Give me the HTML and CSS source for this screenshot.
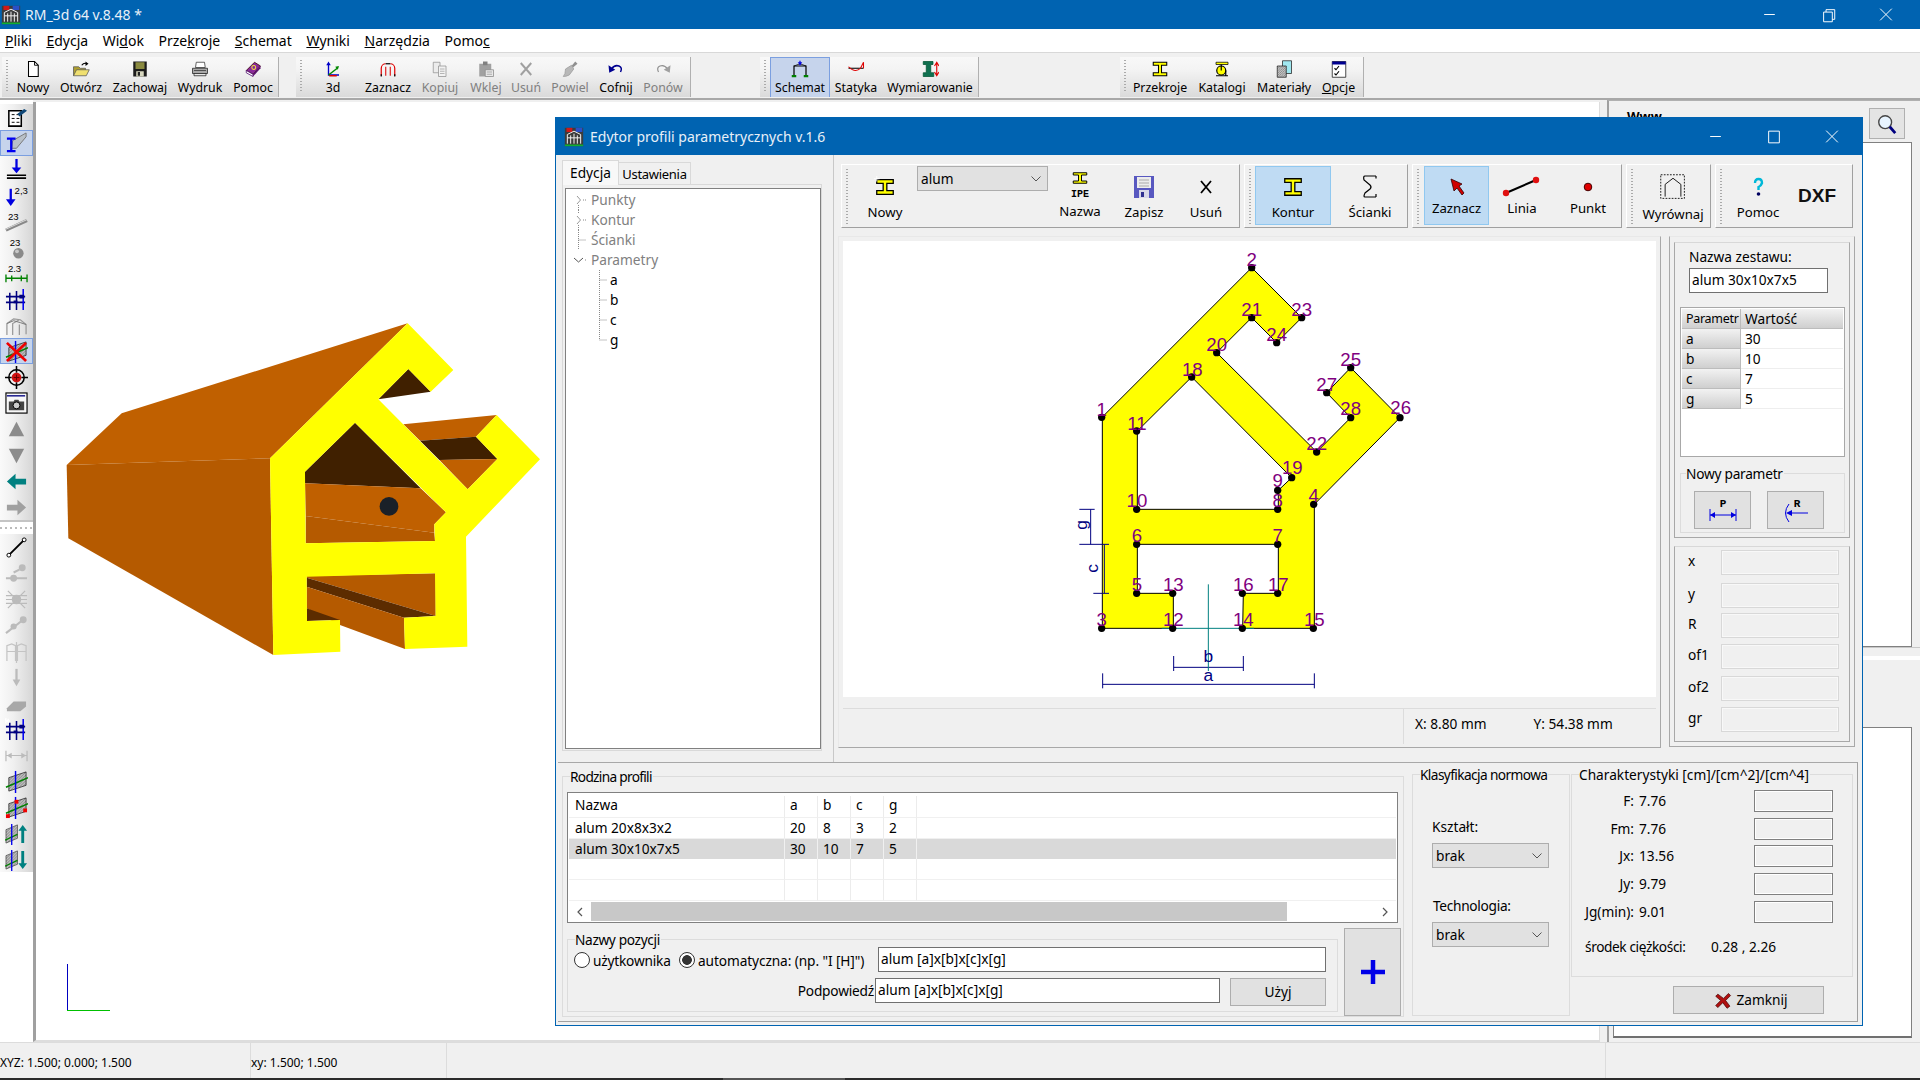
FILE: index.html
```html
<!DOCTYPE html>
<html lang="pl">
<head>
<meta charset="utf-8">
<title>RM_3d 64 v.8.48 *</title>
<link rel="stylesheet" href="styles.css">
</head>
<body>
<svg class="defs" xmlns="http://www.w3.org/2000/svg">
<defs>
<pattern id="h" width="3" height="3" patternUnits="userSpaceOnUse"><rect width="3" height="3" fill="#c4c4c4"/><path d="M0 3L3 0" stroke="#666" stroke-width=".8"/></pattern>
<symbol id="appicon" viewBox="0 0 24 24"><rect x="1" y="1" width="22" height="22" fill="#3c3c3c"/><path d="M3 1h7v5H3z" fill="#d01818"/><path d="M14 1h8v5h-8z" fill="#2a50c8"/><path d="M1 21h22v2H1z" fill="#10b030"/><path d="M4 20V9l8-4 8 4v11M8 20V10M12 20V8M16 20V10M4 13h16" fill="none" stroke="#f0f0f0" stroke-width="1.2"/></symbol>
<symbol id="i-new" viewBox="0 0 24 24"><path d="M6 2h8l5 5v15H6z" fill="#fff" stroke="#000" stroke-width="1.4"/><path d="M14 2v5h5" fill="none" stroke="#000" stroke-width="1.2"/></symbol>
<symbol id="i-open" viewBox="0 0 24 24"><path d="M2 21V9h7l2 2h7v3" fill="#b0a030" stroke="#555"/><path d="M2 21l4-8h17l-4 8z" fill="#f0e070" stroke="#555"/><path d="M13 7q3-4 7-2" fill="none" stroke="#000" stroke-width="1.6"/><path d="M18 2l4 3-4 3z" fill="#000"/></symbol>
<symbol id="i-save" viewBox="0 0 24 24"><rect x="3" y="2" width="18" height="20" fill="#1c1c1c"/><rect x="6" y="3" width="12" height="9" fill="#8a8a40"/><rect x="7" y="15" width="10" height="7" fill="#d8d8c0"/><rect x="9" y="16" width="3" height="5" fill="#222"/></symbol>
<symbol id="i-print" viewBox="0 0 24 24"><path d="M7 3h11l1 7H6z" fill="#fff" stroke="#333"/><path d="M2 11h20v7H2z" fill="#a8a8a8" stroke="#222"/><path d="M4 18h16v3H4z" fill="#e8e8e8" stroke="#222"/><path d="M4 14h16" stroke="#333"/></symbol>
<symbol id="i-book" viewBox="0 0 24 24"><path d="M3 14L14 3l8 5-10 11z" fill="#8a2a98" stroke="#300"/><path d="M3 14l9 5v3l-9-5z" fill="#fff" stroke="#406"/><path d="M12 19l10-11v3L12 22z" fill="#5a1070"/><circle cx="13" cy="10" r="2.6" fill="none" stroke="#f0e040" stroke-width="1.4"/></symbol>
<symbol id="i-3d" viewBox="0 0 24 24"><path d="M6 5v15h14" fill="none" stroke="#0000c8" stroke-width="1.8"/><path d="M6 2l-3 5h6z" fill="#0000c8"/><path d="M6 20L19 10" stroke="#080" stroke-width="2"/><path d="M20 8l-5 1 3 4z" fill="#080"/><path d="M7 21h10" stroke="#d00" stroke-width="2"/></symbol>
<symbol id="i-select" viewBox="0 0 24 24"><path d="M3 21V11a6 6 0 0 1 6-6M21 21V11a6 6 0 0 0-6-6" fill="none" stroke="#e00000" stroke-width="1.6"/><path d="M9 21V9M15 21V9" stroke="#e00000" stroke-width="1.4"/><path d="M9 5h6" stroke="#000" stroke-width="1.6"/><path d="M3 22v-3M21 22v-3" stroke="#000" stroke-width="1.6"/></symbol>
<symbol id="i-copy" viewBox="0 0 24 24"><path d="M3 3h9v14H3z" fill="#ececec" stroke="#909090"/><path d="M10 8h10v14H10z" fill="#f2f2f2" stroke="#909090"/><path d="M12 12h6M12 15h6M12 18h6" stroke="#a0a0a0"/></symbol>
<symbol id="i-paste" viewBox="0 0 24 24"><path d="M3 5h16v17H3z" fill="#a0a0a0"/><rect x="8" y="2" width="6" height="5" fill="#808080"/><path d="M11 13h11v9H11z" fill="#e8e8e8" stroke="#888"/><path d="M13 16h7M13 19h7" stroke="#999"/></symbol>
<symbol id="i-x-gray" viewBox="0 0 24 24"><path d="M5 4l14 16M19 4L5 20" stroke="#a0a0a0" stroke-width="2.6"/></symbol>
<symbol id="i-brush" viewBox="0 0 24 24"><path d="M14 8l5-6 3 3-6 5z" fill="#909090"/><path d="M6 12l8-5 3 5-6 8q-4 2-8 2 3-3 3-10z" fill="#b8b8b8" stroke="#999"/></symbol>
<symbol id="i-undo" viewBox="0 0 24 24"><path d="M6 12q4-6 10-4 5 2 2 8" fill="none" stroke="#000090" stroke-width="2"/><path d="M2 7l1 10 8-4z" fill="#000090"/></symbol>
<symbol id="i-redo" viewBox="0 0 24 24"><path d="M18 12q-4-6-10-4-5 2-2 8" fill="none" stroke="#909090" stroke-width="1.6"/><path d="M22 7l-1 10-8-4z" fill="#a0a0a0"/></symbol>
<symbol id="i-frame" viewBox="0 0 24 24"><path d="M4 20V8h16v12" fill="none" stroke="#000" stroke-width="1.6"/><path d="M4 8l8-3 8 3" fill="none" stroke="#000"/><path d="M1 20h6v3H1zM17 20h6v3h-6z" fill="#008000"/><path d="M12 1v6" stroke="#0000e0" stroke-width="1.6"/><path d="M9 3l3 4 3-4z" fill="#0000e0"/></symbol>
<symbol id="i-static" viewBox="0 0 24 24"><path d="M2 11h20" stroke="#000" stroke-width="1.4"/><path d="M2 9q9 9 16 2l4-8v8" fill="none" stroke="#e00000" stroke-width="1.4"/></symbol>
<symbol id="i-dim" viewBox="0 0 24 24"><path d="M3 2h13v4h-3v11h4v5H3v-5h4V6H3z" fill="#107050" stroke="#053"/><path d="M21 3v18M18 8l3-5 3 5M18 16l3 5 3-5" fill="none" stroke="#e00000" stroke-width="1.5"/></symbol>
<symbol id="i-beam" viewBox="0 0 24 24"><path d="M3 3h18v4h-7v10h7v4H3v-4h7V7H3z" fill="#ffff00" stroke="#000" stroke-width="1.4"/></symbol>
<symbol id="i-cat" viewBox="0 0 24 24"><path d="M4 3h16v3H4z" fill="#ffff00" stroke="#000"/><circle cx="11" cy="14" r="6" fill="#ffff00" stroke="#000" stroke-width="1.6"/><path d="M11 6v8M17 14v7M4 21h16" stroke="#000" stroke-width="1.6" fill="none"/></symbol>
<symbol id="i-mat" viewBox="0 0 24 24"><path d="M10 1h12v17H10z" fill="#a0e8f0" stroke="#222"/><path d="M3 8h12v15H3z" fill="url(#h)" stroke="#222"/></symbol>
<symbol id="i-opt" viewBox="0 0 24 24"><path d="M3 2h18v21H3z" fill="#fff" stroke="#111"/><path d="M3 2h18v4H3z" fill="#000090"/><path d="M6 11l2 2 4-5M6 18l2 2 4-5" fill="none" stroke="#000" stroke-width="1.5"/></symbol>
<symbol id="i-beam-star" viewBox="0 0 24 24"><path d="M3 4h18v4h-7v8h7v4H3v-4h7V8H3z" fill="#ffff00" stroke="#000" stroke-width="1.4"/><path d="M3 0v6M0 3h6" stroke="#fff" stroke-width="1"/></symbol>
<symbol id="i-ipe" viewBox="0 0 24 24"><path d="M3 1h18v3h-7v8h7v3H3v-3h7V4H3z" fill="#ffff00" stroke="#000" stroke-width="1.3"/></symbol>
<symbol id="i-save2" viewBox="0 0 24 24"><path d="M2 1h20v22H2z" fill="#5858c0"/><rect x="5" y="2" width="14" height="11" fill="#ececec"/><path d="M7 5h10M7 8h10M7 11h10" stroke="#aaa"/><rect x="7" y="15" width="10" height="8" fill="#d8d8e8"/><rect x="9" y="17" width="3" height="5" fill="#303090"/></symbol>
<symbol id="i-x" viewBox="0 0 24 24"><path d="M7 6l10 12M17 6L7 18" stroke="#000" stroke-width="1.8"/></symbol>
<symbol id="i-wall" viewBox="0 0 24 24"><path d="M18 1H7Q5 1 6 5L12 10Q14 12 12 14L7 18Q5 22 7 22H18M18 1v2.500M18 19v3" fill="none" stroke="#000" stroke-width="1.200"/></symbol>
<symbol id="i-arrow" viewBox="0 0 24 24"><path d="M6 4l11 5-3 2 5 7-2 2-5-7-3 3z" fill="#d00000" stroke="#300" stroke-width=".8"/></symbol>
<symbol id="i-line" viewBox="0 0 40 24"><path d="M4 18L34 5" stroke="#000" stroke-width="2"/><circle cx="4" cy="18" r="3.2" fill="#e01010"/><circle cx="34" cy="5" r="3.2" fill="#e01010"/></symbol>
<symbol id="i-dot" viewBox="0 0 24 24"><circle cx="12" cy="12" r="3.8" fill="#e00000" stroke="#400"/></symbol>
<symbol id="i-house" viewBox="0 0 32 32"><rect x="2" y="2" width="27" height="27" fill="none" stroke="#000" stroke-dasharray="2 1.500"/><path d="M7 27V13l9-7 9 7v14" fill="none" stroke="#000"/></symbol>
<symbol id="i-q" viewBox="0 0 24 24"><path d="M9 8q0-4 3.500-4t3.500 4q-1 3-3.500 4v3" fill="none" stroke="#00b8d8" stroke-width="2.400"/><circle cx="12.500" cy="19" r="1.800" fill="#000060"/></symbol>
<symbol id="s-prop" viewBox="0 0 24 24"><path d="M4 5h13v16H4z" fill="#fff" stroke="#000" stroke-width="1.6"/><path d="M7 9h3M12 9h3M7 13h3M12 13h3M7 17h3M12 17h3" stroke="#000"/><path d="M13 8l7-5 3 2-8 6z" fill="#104878"/></symbol>
<symbol id="s-beam" viewBox="0 0 24 24"><path d="M8 9l14-8v4L12 17H7z" fill="#b8c0c8" stroke="#777"/><path d="M2 7h9M6.500 7v13M2 20h9" stroke="#0000f0" stroke-width="2.400"/></symbol>
<symbol id="s-load" viewBox="0 0 24 24"><path d="M12 1v11" stroke="#0000e0" stroke-width="2.400"/><path d="M7 10h10l-5 6z" fill="#0000e0"/><path d="M2 18h20M2 21h20" stroke="#000" stroke-width="1.600"/></symbol>
<symbol id="s-load23" viewBox="0 0 24 24"><path d="M6 5v13" stroke="#0000e0" stroke-width="2.400"/><path d="M1 16h10l-5 7z" fill="#0000e0"/><text x="10" y="10" class="ictext">2,3</text></symbol>
<symbol id="s-bar23" viewBox="0 0 24 24"><text x="3" y="10" class="ictext">23</text><path d="M1 21L23 11" stroke="#888" stroke-width="3.400"/><path d="M1 20L23 10" stroke="#ddd"/></symbol>
<symbol id="s-ball23" viewBox="0 0 24 24"><text x="5" y="10" class="ictext">23</text><circle cx="14" cy="18" r="5.400" fill="#8a8a8a"/><circle cx="12.500" cy="16" r="2" fill="#c8c8c8"/></symbol>
<symbol id="s-dim23" viewBox="0 0 24 24"><text x="3" y="10" class="ictext">2.3</text><path d="M1 17h22M1 13v8M7 14v6M17 14v6M23 13v8" fill="none" stroke="#008000" stroke-width="1.400"/></symbol>
<symbol id="s-grid" viewBox="0 0 24 24"><path d="M1 9h20M1 15h20" stroke="#000080" stroke-width="1.800"/><path d="M5 5v18M12 3v20" stroke="#000080" stroke-width="1.600"/><path d="M19 1v22" stroke="#0000f0" stroke-width="1.600"/><path d="M15 7h5v4h-5zM9 13h4v3H9z" fill="#000080"/></symbol>
<symbol id="s-house" viewBox="0 0 24 24"><path d="M2 22V10l7-5 7 1 6 5v10M8 22V10l7-4M15 22V11" fill="none" stroke="#999" stroke-width="1.300"/><path d="M2 10l7-3 7 2 6 2" fill="none" stroke="#777"/></symbol>
<symbol id="s-hatch" viewBox="0 0 24 24"><path d="M4 8L22 2v14L4 22z" fill="url(#h)" stroke="#222" stroke-width=".8"/><path d="M1 18L24 8" stroke="#008000" stroke-width="1.500"/><path d="M11 1v23" stroke="#0000f0" stroke-width="1.500"/></symbol>
<symbol id="s-hatch-x" viewBox="0 0 24 24"><use href="#s-hatch"/><path d="M2 3l20 19M22 3L2 22" stroke="#f00000" stroke-width="2.800"/></symbol>
<symbol id="s-target" viewBox="0 0 24 24"><circle cx="12" cy="12" r="8" fill="none" stroke="#000" stroke-width="1.600"/><path d="M0 12h7M17 12h7M12 0v7M12 17v7" stroke="#000" stroke-width="1.600"/><circle cx="12" cy="12" r="5" fill="#d01010"/><path d="M9 12h6M12 9v6" stroke="#600"/></symbol>
<symbol id="s-cam" viewBox="0 0 24 24"><rect x="1" y="1" width="22" height="21" fill="#f8f8f8" stroke="#000" stroke-width="1.200"/><path d="M2 4h19" stroke="#000080" stroke-width="1.400"/><path d="M4 10h5l1-2h4l1 2h5v9H4z" fill="#444"/><circle cx="12" cy="14" r="3.600" fill="#ccc" stroke="#000"/></symbol>
<symbol id="s-up" viewBox="0 0 24 24"><path d="M12 4l8 15H4z" fill="#8c8c8c"/></symbol>
<symbol id="s-down" viewBox="0 0 24 24"><path d="M12 20l8-15H4z" fill="#8c8c8c"/></symbol>
<symbol id="s-left" viewBox="0 0 24 24"><path d="M2 12l9-8v5h11v6H11v5z" fill="#008080"/></symbol>
<symbol id="s-right" viewBox="0 0 24 24"><path d="M22 12l-9-8v5H2v6h11v5z" fill="#a0a0a0"/></symbol>
<symbol id="s-wire" viewBox="0 0 24 24"><path d="M4 20L20 4" stroke="#000" stroke-width="2"/><circle cx="4" cy="20" r="2" fill="#fff" stroke="#000"/><circle cx="20" cy="4" r="2" fill="#fff" stroke="#000"/></symbol>
<symbol id="s-g1" viewBox="0 0 24 24"><circle cx="18" cy="6" r="3.600" fill="#bbb"/><path d="M15 8l-6 3M1 17h22" stroke="#bbb" stroke-width="2.200"/><circle cx="9" cy="17" r="3.600" fill="#bbb"/></symbol>
<symbol id="s-g2" viewBox="0 0 24 24"><circle cx="12" cy="12" r="5" fill="#bbb"/><path d="M1 12h22M1 8h22M1 16h22M3 3l18 18M21 3L3 21" stroke="#bbb" stroke-width="1.300"/></symbol>
<symbol id="s-g3" viewBox="0 0 24 24"><circle cx="19" cy="6" r="3.600" fill="#bbb"/><circle cx="9" cy="13" r="3.200" fill="#bbb"/><path d="M1 20L19 6" stroke="#bbb" stroke-width="2.200"/></symbol>
<symbol id="s-g4" viewBox="0 0 24 24"><path d="M2 22V6l5-2 4 2v16M13 22V6l4-2 5 2v16M12 2v22M2 12h9M13 12h9" fill="none" stroke="#c4c4c4" stroke-width="1.300"/></symbol>
<symbol id="s-g5" viewBox="0 0 24 24"><path d="M12 3v12" stroke="#bbb" stroke-width="2.400"/><path d="M8 14h8l-4 7z" fill="#bbb"/></symbol>
<symbol id="s-g6" viewBox="0 0 24 24"><path d="M2 17l7-7h13v5l-6 5H2z" fill="#a8a8a8"/></symbol>
<symbol id="s-g7" viewBox="0 0 24 24"><path d="M1 12h22M1 7v11M23 7v11M4 12h3M17 12h3" stroke="#bbb" stroke-width="1.300"/><path d="M2 12l5-3v6zM22 12l-5-3v6z" fill="#bbb"/></symbol>
<symbol id="s-grid2" viewBox="0 0 24 24"><use href="#s-grid"/><path d="M1 0v6M-1 3h6M0 1l4 4M4 1L0 5" stroke="#fff" stroke-width="1.100"/></symbol>
<symbol id="s-hatch2" viewBox="0 0 24 24"><use href="#s-hatch"/><rect x="1" y="19" width="4" height="4" fill="#f00000"/><rect x="10" y="4" width="4" height="4" fill="#f00000"/><rect x="19" y="13" width="4" height="4" fill="#f00000"/></symbol>
<symbol id="s-hatch-up" viewBox="0 0 24 24"><path d="M1 8L13 3v14L1 22z" fill="url(#h)" stroke="#222" stroke-width=".6"/><path d="M0 19L13 13" stroke="#008000" stroke-width="1.400"/><path d="M7 2v22" stroke="#0000f0" stroke-width="1.400"/><path d="M15 9h2v13h3V9h3l-4.500-6-4.500 6z" fill="#008080"/></symbol>
<symbol id="s-hatch-down" viewBox="0 0 24 24"><path d="M1 8L13 3v14L1 22z" fill="url(#h)" stroke="#222" stroke-width=".6"/><path d="M0 19L13 13" stroke="#008000" stroke-width="1.400"/><path d="M7 2v22" stroke="#0000f0" stroke-width="1.400"/><path d="M17 3h3v13h3l-4.500 6-4.500-6h3z" fill="#008080"/></symbol>
<symbol id="chev" viewBox="0 0 12 8"><path d="M1.500 1.500L6 6l4.500-4.500" fill="none" stroke="#555" stroke-width="1"/></symbol>
</defs>
</svg>

<header class="titlebar">
  <svg class="app-ico"><use href="#appicon"/></svg>
  <span class="title-text">RM_3d 64 v.8.48 *</span>
  <div class="winctl">
    <svg class="ctl" viewBox="0 0 58 30"><path d="M24 15h11" stroke="#fff"/></svg>
    <svg class="ctl" viewBox="0 0 58 30"><path d="M25.500 12.500h9v10h-9zM28 12.500V10h9v10h-2.500" fill="none" stroke="#fff"/></svg>
    <svg class="ctl" viewBox="0 0 58 30"><path d="M24 9l12 12M36 9L24 21" stroke="#fff"/></svg>
  </div>
</header>

<nav class="menubar">
  <span><u>P</u>liki</span><span><u>E</u>dycja</span><span>Wi<u>d</u>ok</span><span>Prze<u>k</u>roje</span><span><u>S</u>chemat</span><span><u>W</u>yniki</span><span><u>N</u>arzędzia</span><span>Pomo<u>c</u></span>
</nav>

<div class="toolbars">
  <div class="tbg tbg1"><i class="grip"></i>
    <div class="tb w42"><svg class="tic"><use href="#i-new"/></svg>Nowy</div>
    <div class="tb w54"><svg class="tic"><use href="#i-open"/></svg>Otwórz</div>
    <div class="tb w64"><svg class="tic"><use href="#i-save"/></svg>Zachowaj</div>
    <div class="tb w56"><svg class="tic"><use href="#i-print"/></svg>Wydruk</div>
    <div class="tb w50"><svg class="tic"><use href="#i-book"/></svg>Pomoc</div>
  </div>
  <div class="tbg tbg2"><i class="grip"></i>
    <div class="tb w54"><svg class="tic"><use href="#i-3d"/></svg>3d</div>
    <div class="tb w56"><svg class="tic"><use href="#i-select"/></svg>Zaznacz</div>
    <div class="tb w48 off"><svg class="tic"><use href="#i-copy"/></svg>Kopiuj</div>
    <div class="tb w44 off"><svg class="tic"><use href="#i-paste"/></svg>Wklej</div>
    <div class="tb w36 off"><svg class="tic"><use href="#i-x-gray"/></svg>Usuń</div>
    <div class="tb w52 off"><svg class="tic"><use href="#i-brush"/></svg>Powiel</div>
    <div class="tb w40"><svg class="tic"><use href="#i-undo"/></svg>Cofnij</div>
    <div class="tb w54 off"><svg class="tic"><use href="#i-redo"/></svg>Ponów</div>
  </div>
  <div class="tbg tbg3"><i class="grip"></i>
    <div class="tb w60 tb-on"><svg class="tic"><use href="#i-frame"/></svg>Schemat</div>
    <div class="tb w52"><svg class="tic"><use href="#i-static"/></svg>Statyka</div>
    <div class="tb w96"><svg class="tic"><use href="#i-dim"/></svg>Wymiarowanie</div>
  </div>
  <div class="tbg tbg4"><i class="grip"></i>
    <div class="tb w60"><svg class="tic"><use href="#i-beam"/></svg>Przekroje</div>
    <div class="tb w64"><svg class="tic"><use href="#i-cat"/></svg>Katalogi</div>
    <div class="tb w60"><svg class="tic"><use href="#i-mat"/></svg>Materiały</div>
    <div class="tb w49"><svg class="tic"><use href="#i-opt"/></svg><span><u>O</u>pcje</span></div>
  </div>
</div>

<main class="main">
  <aside class="strip">
    <div class="strip-tools">
      <div class="st"><svg><use href="#s-prop"/></svg></div>
      <div class="st st-on"><svg><use href="#s-beam"/></svg></div>
      <div class="st"><svg><use href="#s-load"/></svg></div>
      <div class="st"><svg><use href="#s-load23"/></svg></div>
      <div class="st"><svg><use href="#s-bar23"/></svg></div>
      <div class="st"><svg><use href="#s-ball23"/></svg></div>
      <div class="st"><svg><use href="#s-dim23"/></svg></div>
      <div class="st"><svg><use href="#s-grid"/></svg></div>
      <div class="st"><svg><use href="#s-house"/></svg></div>
      <div class="st st-on"><svg><use href="#s-hatch-x"/></svg></div>
      <div class="st"><svg><use href="#s-target"/></svg></div>
      <div class="st"><svg><use href="#s-cam"/></svg></div>
      <div class="st"><svg><use href="#s-up"/></svg></div>
      <div class="st"><svg><use href="#s-down"/></svg></div>
      <div class="st"><svg><use href="#s-left"/></svg></div>
      <div class="st"><svg><use href="#s-right"/></svg></div>
    </div>
    <div class="strip-sep"></div>
    <div class="strip-tools">
      <div class="st"><svg><use href="#s-wire"/></svg></div>
      <div class="st"><svg><use href="#s-g1"/></svg></div>
      <div class="st"><svg><use href="#s-g2"/></svg></div>
      <div class="st"><svg><use href="#s-g3"/></svg></div>
      <div class="st"><svg><use href="#s-g4"/></svg></div>
      <div class="st"><svg><use href="#s-g5"/></svg></div>
      <div class="st"><svg><use href="#s-g6"/></svg></div>
      <div class="st"><svg><use href="#s-grid2"/></svg></div>
      <div class="st"><svg><use href="#s-g7"/></svg></div>
      <div class="st"><svg><use href="#s-hatch"/></svg></div>
      <div class="st"><svg><use href="#s-hatch2"/></svg></div>
      <div class="st"><svg><use href="#s-hatch-up"/></svg></div>
      <div class="st"><svg><use href="#s-hatch-down"/></svg></div>
    </div>
  </aside>

  <section class="view3d">
    <svg class="scene" viewBox="0 0 1564 940" xmlns="http://www.w3.org/2000/svg">
      <g transform="translate(4 198) scale(.33333)">
        <path d="M245 340L1103 70 690 475 80 495z" fill="#c06000"/>
        <path d="M80 495L690 475 700 1065 85 715z" fill="#b55a00"/>
        <path d="M1105 207l67 68-157 23z" fill="#402000"/>
        <path d="M1090 373l280-28-62 65-168 12z" fill="#c06000"/>
        <path d="M1140 422l168-12 64 67-174 3z" fill="#402000"/>
        <path d="M1198 480l174-3-89 91z" fill="#c06000"/>
        <path d="M795 515L945 368 1142 565 795 550z" fill="#402000"/>
        <path d="M795 550l347 15 76 72-35 36v25L797 648z" fill="#c06000"/>
        <path d="M797 648l386 50 2 25-388 7z" fill="#b55a00"/>
        <circle cx="1047" cy="619" r="28" fill="#1a2028"/>
        <path d="M800 828l387-8v128L800 833z" fill="#b55a00"/>
        <path d="M800 833l387 115-95 5-292-93z" fill="#5c2c00"/>
        <path d="M800 860l292 93 3 94-195-72-100-50z" fill="#b55a00"/>
        <path d="M800 925l100 35-99 3z" fill="#5c2c00"/>
        <path fill-rule="evenodd" fill="#ffff00" d="M690 475L1103 70l137 140-68 65-67-68-90 91 268 270 89-91-64-67 62-65 130 133-222 232 4 330-187 7-3-94 95-5-2-128-385 10 1 133 99-3 1 95-201 10zM795 515l2 215 388-7-2-50 35-36L945 368z"/>
      </g>
      <path d="M31.500 862v46" stroke="#0000c0" fill="none"/>
      <path d="M31 908.500h43" stroke="#00c000" fill="none"/>
    </svg>
  </section>

  <aside class="rpanel">
    <div class="rp-head"><span class="rp-www">Www</span>
      <div class="rp-search"><svg viewBox="0 0 24 24"><circle cx="10" cy="10" r="7" fill="#e8f4ff" stroke="#444" stroke-width="1.500"/><path d="M15 15l6 7" stroke="#000080" stroke-width="3"/></svg></div>
    </div>
    <div class="rp-white rp-top"></div>
    <div class="rp-split"></div>
    <div class="rp-gray"></div>
    <div class="rp-white rp-bot"></div>
  </aside>
</main>

<footer class="statusbar">
  <span class="sb sb1">XYZ: 1.500; 0.000; 1.500</span>
  <span class="sb sb2">xy: 1.500; 1.500</span>
  <span class="sb sb3"></span>
</footer>
<div class="taskbar"><i class="task-on"></i></div>

<div class="dialog">
  <div class="d-title">
    <svg class="app-ico"><use href="#appicon"/></svg>
    <span class="d-title-text">Edytor profili parametrycznych v.1.6</span>
    <div class="winctl d-ctl">
      <svg class="ctl" viewBox="0 0 58 38"><path d="M23 19h11" stroke="#fff"/></svg>
      <svg class="ctl" viewBox="0 0 58 38"><path d="M23.500 13.500h11v12h-11z" fill="none" stroke="#fff"/></svg>
      <svg class="ctl" viewBox="0 0 58 38"><path d="M23 13l12 12M35 13L23 25" stroke="#fff"/></svg>
    </div>
  </div>

  <div class="d-top">
    <div class="d-left">
      <div class="tabs"><span class="tab tab-on">Edycja</span><span class="tab tab-u">Ustawienia</span></div>
      <div class="tabpage">
        <div class="tree">
          <div class="t-row t-gray"><svg class="t-pre" viewBox="0 0 28 20"><path d="M11 6l3.500 4L11 14" fill="none" stroke="#999"/><path d="M12.500 15v5M17 10h3" stroke="#888" stroke-dasharray="1 1" fill="none"/></svg>Punkty</div>
          <div class="t-row t-gray"><svg class="t-pre" viewBox="0 0 28 20"><path d="M11 6l3.500 4L11 14" fill="none" stroke="#999"/><path d="M12.500 0v4M12.500 15v5M17 10h3" stroke="#888" stroke-dasharray="1 1" fill="none"/></svg>Kontur</div>
          <div class="t-row t-gray"><svg class="t-pre" viewBox="0 0 28 20"><path d="M12.500 0v20M12.500 10h8" stroke="#888" stroke-dasharray="1 1" fill="none"/></svg>Ścianki</div>
          <div class="t-row t-gray"><svg class="t-pre" viewBox="0 0 28 20"><path d="M8 8l4.500 4L17 8" fill="none" stroke="#555"/><path d="M19 10h2" stroke="#888" stroke-dasharray="1 1" fill="none"/></svg>Parametry</div>
          <div class="t-row t-kid"><svg class="t-pre2" viewBox="0 0 46 20"><path d="M33.500 0v20M33.500 10h8" stroke="#888" stroke-dasharray="1 1" fill="none"/></svg>a</div>
          <div class="t-row t-kid"><svg class="t-pre2" viewBox="0 0 46 20"><path d="M33.500 0v20M33.500 10h8" stroke="#888" stroke-dasharray="1 1" fill="none"/></svg>b</div>
          <div class="t-row t-kid"><svg class="t-pre2" viewBox="0 0 46 20"><path d="M33.500 0v20M33.500 10h8" stroke="#888" stroke-dasharray="1 1" fill="none"/></svg>c</div>
          <div class="t-row t-kid"><svg class="t-pre2" viewBox="0 0 46 20"><path d="M33.500 0v10M33.500 10h8" stroke="#888" stroke-dasharray="1 1" fill="none"/></svg>g</div>
        </div>
      </div>
    </div>

    <div class="d-right">
      <div class="d-toolbar">
        <div class="dg dg-a"><i class="grip"></i>
          <div class="dt w64"><svg class="dic ib"><use href="#i-beam-star"/></svg><span>Nowy</span></div>
          <div class="dcombo"><span>alum</span><svg><use href="#chev"/></svg></div>
          <div class="dt w64"><svg class="dic ipe"><use href="#i-ipe"/></svg><b class="ipe-t">IPE</b><span>Nazwa</span></div>
          <div class="dt w64"><svg class="dic"><use href="#i-save2"/></svg><span>Zapisz</span></div>
          <div class="dt w60"><svg class="dic"><use href="#i-x"/></svg><span>Usuń</span></div>
        </div>
        <div class="dg dg-b"><i class="grip"></i>
          <div class="dt w76 dt-on"><svg class="dic ib"><use href="#i-beam"/></svg><span>Kontur</span></div>
          <div class="dt w78"><svg class="dic"><use href="#i-wall"/></svg><span>Ścianki</span></div>
        </div>
        <div class="dg dg-c"><i class="grip"></i>
          <div class="dt w65 dt-on dt-up"><svg class="dic"><use href="#i-arrow"/></svg><span>Zaznacz</span></div>
          <div class="dt w66 dt-up"><svg class="dic wide"><use href="#i-line"/></svg><span>Linia</span></div>
          <div class="dt w66 dt-up"><svg class="dic"><use href="#i-dot"/></svg><span>Punkt</span></div>
        </div>
        <div class="dg dg-d"><i class="grip"></i>
          <div class="dt w70"><svg class="dic big"><use href="#i-house"/></svg><span>Wyrównaj</span></div>
        </div>
        <div class="dg dg-e"><i class="grip"></i>
          <div class="dt w64"><svg class="dic"><use href="#i-q"/></svg><span>Pomoc</span></div>
          <div class="dt w54 dxf">DXF</div>
        </div>
      </div>

      <div class="d-panels">
        <div class="canvas-panel">
          <div class="canvas">
            <svg class="profile" viewBox="0 0 1200 1380" xmlns="http://www.w3.org/2000/svg">
              <path fill-rule="evenodd" fill="#ffff00" stroke="#000" stroke-width="3" d="M127 528L575 80 725 230 650 305 575 230 470 335 770 633 872 530 800 455 872 380 1020 530 763 790V1162H548L550 1057H655V910H232V1057H340V1162H127zM232 570L395 408 695 710 655 748V805H232z"/>
              <g fill="none" stroke="#000080" stroke-width="3">
                <path d="M92 805V910M58 805H104M58 910H147M133 910V1057M100 1057H147"/>
                <path d="M341 1279H550M341 1245V1290M550 1245V1290"/>
                <path d="M128 1330H763M128 1297V1342M763 1297V1342"/>
              </g>
              <path d="M445 1030V1290M305 1162H582" stroke="#008080" stroke-width="3" fill="none"/>
              <g fill="#000">
                <circle cx="125" cy="529" r="11"/><circle cx="575" cy="80" r="11"/><circle cx="125" cy="1162" r="11"/><circle cx="761" cy="790" r="11"/><circle cx="230" cy="1057" r="11"/><circle cx="230" cy="910" r="11"/><circle cx="653" cy="910" r="11"/><circle cx="653" cy="805" r="11"/><circle cx="653" cy="748" r="11"/><circle cx="230" cy="805" r="11"/><circle cx="230" cy="570" r="11"/><circle cx="338" cy="1162" r="11"/><circle cx="338" cy="1057" r="11"/><circle cx="547" cy="1162" r="11"/><circle cx="760" cy="1162" r="11"/><circle cx="547" cy="1057" r="11"/><circle cx="653" cy="1057" r="11"/><circle cx="395" cy="408" r="11"/><circle cx="695" cy="710" r="11"/><circle cx="470" cy="335" r="11"/><circle cx="575" cy="230" r="11"/><circle cx="770" cy="633" r="11"/><circle cx="725" cy="230" r="11"/><circle cx="650" cy="305" r="11"/><circle cx="872" cy="380" r="11"/><circle cx="1020" cy="530" r="11"/><circle cx="800" cy="455" r="11"/><circle cx="872" cy="530" r="11"/>
              </g>
              <g class="nlabel">
                <text x="125" y="525">1</text><text x="575" y="74">2</text><text x="125" y="1156">3</text><text x="761" y="784">4</text><text x="231" y="1051">5</text><text x="231" y="904">6</text><text x="653" y="904">7</text><text x="653" y="799">8</text><text x="653" y="738">9</text><text x="231" y="799">10</text><text x="231" y="568">11</text><text x="340" y="1156">12</text><text x="340" y="1051">13</text><text x="550" y="1156">14</text><text x="763" y="1156">15</text><text x="550" y="1051">16</text><text x="655" y="1051">17</text><text x="397" y="404">18</text><text x="697" y="700">19</text><text x="470" y="329">20</text><text x="575" y="224">21</text><text x="770" y="626">22</text><text x="725" y="224">23</text><text x="650" y="299">24</text><text x="872" y="374">25</text><text x="1022" y="520">26</text><text x="800" y="449">27</text><text x="872" y="521">28</text>
              </g>
              <g class="dlabel">
                <text x="445" y="1262">b</text><text x="445" y="1320">a</text>
                <text transform="translate(82 852) rotate(-90)">g</text>
                <text transform="translate(115 982) rotate(-90)">c</text>
              </g>
            </svg>
          </div>
          <div class="canvas-status">
            <div class="cs-left"></div>
            <div class="cs-right"><span>X: 8.80 mm</span><span>Y: 54.38 mm</span></div>
          </div>
        </div>

        <div class="side">
          <div class="side-box sb-a">
            <div class="side-lbl">Nazwa zestawu:</div>
            <div class="field f-name">alum 30x10x7x5</div>
            <div class="ptable">
              <div class="p-row p-head"><span class="p-fit">Parametr</span><span>Wartość</span></div>
              <div class="p-row"><span>a</span><span>30</span></div>
              <div class="p-row"><span>b</span><span>10</span></div>
              <div class="p-row"><span>c</span><span>7</span></div>
              <div class="p-row"><span>g</span><span>5</span></div>
            </div>
            <div class="fs fs-new"><span class="lg">Nowy parametr</span>
              <div class="pbtn"><svg viewBox="0 0 32 24"><text x="16" y="9" class="pt">P</text><path d="M3 11v12M29 11v12M3 17h26" stroke="#0000e0" fill="none"/><path d="M3 17l5-3v6zM29 17l-5-3v6z" fill="#0000e0"/></svg></div>
              <div class="pbtn"><svg viewBox="0 0 32 24"><text x="17" y="9" class="pt">R</text><path d="M9 6Q2 15 9 24M8 15h20" stroke="#0000e0" fill="none"/><path d="M6 15l6-3v6z" fill="#0000e0"/></svg></div>
            </div>
          </div>
          <div class="side-box sb-b">
            <div class="kv k1"><span>x</span><i class="ro"></i></div>
            <div class="kv k2"><span>y</span><i class="ro"></i></div>
            <div class="kv k3"><span>R</span><i class="ro"></i></div>
            <div class="kv k4"><span>of1</span><i class="ro"></i></div>
            <div class="kv k5"><span>of2</span><i class="ro"></i></div>
            <div class="kv k4"><span>gr</span><i class="ro"></i></div>
          </div>
        </div>
      </div>
    </div>
  </div>

  <div class="d-bottom">
    <div class="fs fs-family"><span class="lg lg-fam">Rodzina profili</span>
      <div class="ftable">
        <div class="f-row f-head"><span>Nazwa</span><span>a</span><span>b</span><span>c</span><span>g</span><span></span></div>
        <div class="f-row"><span>alum 20x8x3x2</span><span>20</span><span>8</span><span>3</span><span>2</span><span></span></div>
        <div class="f-row f-sel"><span>alum 30x10x7x5</span><span>30</span><span>10</span><span>7</span><span>5</span><span></span></div>
        <div class="f-row"><span></span><span></span><span></span><span></span><span></span><span></span></div>
        <div class="f-row"><span></span><span></span><span></span><span></span><span></span><span></span></div>
        <div class="hscroll"><svg viewBox="0 0 8 12"><path d="M6 2L2 6l4 4" fill="none" stroke="#555" stroke-width="1.200"/></svg><i class="thumb"></i><svg viewBox="0 0 8 12"><path d="M2 2l4 4-4 4" fill="none" stroke="#555" stroke-width="1.200"/></svg></div>
      </div>
      <div class="fam-low">
        <div class="fs fs-names"><span class="lg lg-nam">Nazwy pozycji</span>
          <div class="n-row">
            <i class="radio"></i><span class="r-l1">użytkownika</span>
            <i class="radio radio-on"></i><span class="r-l2">automatyczna: (np. "I [H]")</span>
            <div class="field f-auto">alum [a]x[b]x[c]x[g]</div>
          </div>
          <div class="n-row n-row2">
            <span class="hint">Podpowiedź</span>
            <div class="field f-hint">alum [a]x[b]x[c]x[g]</div>
            <div class="btn b-use">Użyj</div>
          </div>
        </div>
        <div class="btn b-plus"><svg viewBox="0 0 28 28"><path d="M14 2v24M2 14h24" stroke="#0000e8" stroke-width="4.500"/></svg></div>
      </div>
    </div>

    <div class="fs fs-class"><span class="lg lg-cls">Klasyfikacja normowa</span>
      <div class="c-l">Kształt:</div>
      <div class="dcombo c-sel"><span>brak</span><svg><use href="#chev"/></svg></div>
      <div class="c-l c-l2">Technologia:</div>
      <div class="dcombo c-sel"><span>brak</span><svg><use href="#chev"/></svg></div>
    </div>

    <div class="char-col">
      <div class="fs fs-char"><span class="lg">Charakterystyki [cm]/[cm^2]/[cm^4]</span>
        <div class="ch"><span class="ch-k">F:</span><span>7.76</span><i class="ch-i"></i></div>
        <div class="ch"><span class="ch-k">Fm:</span><span>7.76</span><i class="ch-i"></i></div>
        <div class="ch"><span class="ch-k">Jx:</span><span>13.56</span><i class="ch-i"></i></div>
        <div class="ch"><span class="ch-k">Jy:</span><span>9.79</span><i class="ch-i"></i></div>
        <div class="ch"><span class="ch-k">Jg(min):</span><span>9.01</span><i class="ch-i"></i></div>
        <div class="cog"><span>środek ciężkości:</span><span>0.28 , 2.26</span></div>
      </div>
      <div class="btn b-close"><svg viewBox="0 0 24 24"><path d="M4 3l8 6 7-7 3 3-7 7 6 8-4 3-6-8-7 7-3-3 7-7-7-6z" fill="#b01010" stroke="#400"/></svg>Zamknij</div>
    </div>
  </div>
</div>
</body>
</html>
```
FILE: styles.css
```css
* { box-sizing: border-box; }
html, body { margin: 0; padding: 0; }
body {
  width: 1920px; height: 1080px; overflow: hidden;
  display: flex; flex-direction: column;
  background: #f0f0f0; color: #000;
  font: 14px/18px "Noto Sans", "Open Sans", sans-serif;
}
i { display: block; font-style: normal; }
.defs { width: 0; height: 0; display: block; flex: none; }
.ictext { font: 10px "Liberation Sans", sans-serif; fill: #000; }

/* title */
.titlebar { height: 29px; flex: none; background: #0063b1; color: #fff; display: flex; align-items: center; }
.app-ico { width: 20px; height: 22px; margin-left: 1px; flex: none; }
.title-text { margin-left: 4px; font-size: 14px; color: #e8f0f8; }
.winctl { margin-left: auto; display: flex; margin-right: 6px; }
.ctl { width: 58px; height: 29px; display: block; }

/* menu */
.menubar { height: 23px; flex: none; background: #fff; display: flex; align-items: center; padding-left: 5px; gap: 14.600px; font-size: 14px; }

/* toolbars */
.toolbars { height: 48px; flex: none; display: flex; background: #f0f0f0; border-top: 1px solid #d8d8d8; border-bottom: 2px solid #a8a8a8; padding-top: 4px; padding-left: 2px; }
.tbg { height: 40px; display: flex; background: linear-gradient(#f8f8f8, #f4f4f4 30%, #dadada); border-right: 1px solid #b0b0b0; flex: none; }
.grip { width: 10px; flex: none; background: repeating-linear-gradient(#aaa 0 1px, transparent 1px 3px) 4px 3px / 2px 32px no-repeat; }
.tbg2 { margin-left: 17px; }
.tbg3 { margin-left: 69px; }
.tbg4 { margin-left: 141px; }
.tb { display: flex; flex-direction: column; align-items: center; font-size: 12.300px; line-height: 17px; white-space: nowrap; flex: none; }
.tic { width: 18px; height: 18px; margin: 3px 0 1px; display: block; flex: none; }
.off { color: #808080; }
.tb-on { background: #c6d4ec; border: 1px solid #7b9fe0; border-bottom: 0; }
.tb-on .tic { margin-top: 2px; }
.w36 { width: 36px; } .w40 { width: 40px; } .w42 { width: 42px; } .w44 { width: 44px; } .w48 { width: 48px; } .w49 { width: 49px; } .w50 { width: 50px; } .w52 { width: 52px; } .w54 { width: 54px; } .w56 { width: 56px; } .w60 { width: 60px; } .w64 { width: 64px; } .w65 { width: 65px; } .w66 { width: 66px; } .w70 { width: 70px; } .w76 { width: 76px; } .w78 { width: 78px; } .w96 { width: 96px; }

/* main */
.main { flex: 1; display: flex; min-height: 0; }
.strip { width: 33px; flex: none; background: #fff; padding-top: 4px; }
.strip-tools { background: linear-gradient(90deg, #fafafa, #f0f0f0 40%, #d6d6d6); }
.st { height: 26px; display: flex; align-items: center; justify-content: center; }
.st svg { width: 23px; height: 23px; display: block; }
.st-on { background: #c6d4ec; outline: 1px solid #7b9fe0; outline-offset: -1px; }
.strip-sep { height: 14px; background: repeating-linear-gradient(90deg, #bbb 0 2px, transparent 2px 5px) 0 5px / 100% 2px no-repeat; border-top: 2px solid #c4c4c4; }
.view3d { flex: none; width: 1567px; margin-top: 2px; border-left: 3px solid #a0a0a0; background: #fff; border-bottom: 2px solid #ddd; border-right: 1px solid #ddd; }
.scene { display: block; width: 1564px; height: 940px; }
.rpanel { width: 313px; margin-left: 7px; flex: none; display: flex; flex-direction: column; border-left: 2px solid #a0a0a0; border-top: 1px solid #b0b0b0; padding-left: 4px; padding-right: 8px; }
.rp-head { height: 41px; flex: none; display: flex; }
.rp-www { margin-left: 14px; margin-top: 6px; font-weight: 700; font-size: 13px; }
.rp-search { width: 36px; height: 31px; margin-left: auto; margin-top: 7px; margin-right: 7px; background: #e4e4e4; border: 1px solid #b0b0b0; display: flex; align-items: center; justify-content: center; }
.rp-search svg { width: 22px; height: 22px; }
.rp-white { background: #fff; border: 1px solid #808080; }
.rp-top { height: 505px; flex: none; }
.rp-split { height: 13px; flex: none; border-top: 1px solid #c8c8c8; border-bottom: 1px solid #fff; margin: 0 -8px 0 -4px; box-shadow: inset 0 4px 0 #f0f0f0, inset 0 -3px 0 #fff; }
.rp-gray { height: 67px; flex: none; }
.rp-bot { flex: 1; margin-bottom: 4px; border-bottom: 2px solid #707070; }

/* status */
.statusbar { height: 36px; flex: none; background: #f0f0f0; border-top: 1px solid #dcdcdc; display: flex; font-size: 12px; line-height: 39px; }
.sb { border-right: 1px solid #dcdcdc; white-space: nowrap; }
.sb1 { width: 251px; }
.sb2 { width: 196px; }
.sb3 { width: 1159px; }
.taskbar { height: 2px; flex: none; background: #2b2b2b; padding-left: 723px; }
.task-on { width: 122px; height: 2px; background: #555; }

/* dialog */
.dialog { position: absolute; left: 555px; top: 117px; width: 1308px; height: 909px; border: 1px solid #0063b1; background: #f0f0f0; display: flex; flex-direction: column; font-size: 13.700px; }
.d-title { height: 37px; flex: none; background: #0063b1; color: #fff; display: flex; align-items: center; padding-left: 8px; }
.d-title .app-ico { margin: 0; width: 20px; height: 22px; }
.d-title-text { margin-left: 6px; font-size: 14px; color: #e8f0f8; }
.d-ctl .ctl { height: 37px; width: 58px; }
.d-ctl { margin-right: 1px; }
.d-top { height: 607px; flex: none; display: flex; padding-left: 6px; }
.d-left { width: 262px; flex: none; }
.tabs { display: flex; margin-top: 5px; height: 25px; align-items: flex-end; position: relative; z-index: 1; margin-bottom: -1px; }
.tab { height: 23px; width: 72px; display: flex; align-items: center; justify-content: center; background: #f0f0f0; border: 1px solid #d9d9d9; border-left: 0; }
.tab-u { font-size: 13px; letter-spacing: -.3px; }
.tab-on { height: 25px; width: 57px; border-left: 1px solid #d9d9d9; border-bottom: 0; background: #f8f8f8; }
.tabpage { height: 567px; width: 260px; border: 1px solid #d9d9d9; padding: 3px 0 0 2px; }
.tree { width: 256px; height: 561px; background: #fff; border: 1px solid #808080; padding-top: 1px; }
.t-row { height: 20px; display: flex; align-items: center; }
.t-gray { color: #808080; }
.t-pre { width: 28px; height: 20px; display: block; flex: none; margin-right: -3px; }
.t-pre2 { width: 46px; height: 20px; display: block; flex: none; margin-right: -2px; }
.d-right { width: 1029px; margin-left: 9px; flex: none; border-left: 1px solid #c8c8c8; }
.d-toolbar { display: flex; gap: 4px; padding-left: 7px; margin-top: 9px; height: 64px; }
.dg { height: 64px; background: #f0f0f0; display: flex; border-right: 1px solid #a0a0a0; border-bottom: 1px solid #a0a0a0; border-top: 1px solid #fff; border-left: 1px solid #fff; padding-top: 1px; flex: none; }
.dg .grip { height: 58px; background-size: 2px 55px; }
.dg-a { width: 399px; }
.dg-a .grip { width: 11px; }
.dg-b { width: 164px; }
.dg-c { width: 210px; }
.dg-c .grip { margin-right: 1px; }
.dg-d { width: 85px; }
.dg-d .grip { margin-right: 1px; }
.dg-e { width: 138px; }
.dt { height: 59px; display: flex; flex-direction: column; align-items: center; flex: none; white-space: nowrap; font-size: 13.200px; }
.dic { width: 24px; height: 24px; margin-top: 9px; margin-bottom: 4px; display: block; flex: none; }
.dic.ib { width: 22px; height: 22px; margin-top: 10px; margin-bottom: 5px; }
.dic.wide { width: 40px; }
.dic.big { width: 28px; height: 28px; margin-top: 7px; margin-bottom: 4px; }
.dic.ipe { width: 24px; height: 18px; margin-top: 6px; margin-bottom: 0; }
.ipe-t { font: 700 10px/10px "Liberation Mono", monospace; height: 12px; display: block; }
.dt-up .dic { margin-bottom: 0; }
.dt-on { background: #bfdbf3; border: 1px solid #90c8f0; }
.dt-on .dic { margin-top: 8px; }
.dt-on .dic.ib { margin-top: 9px; }
.dxf { font: 700 19px/59px "Liberation Sans", sans-serif; color: #111; justify-content: center; }
.dcombo { height: 25px; display: flex; align-items: center; justify-content: space-between; background: #e1e1e1; border: 1px solid #adadad; padding: 0 5px 0 3px; flex: none; }
.dg .dcombo { width: 131px; }
.dcombo svg { width: 12px; height: 8px; }
.d-panels { display: flex; margin-top: 8px; gap: 8px; }
.canvas-panel { width: 823px; height: 512px; border: 1px solid #a8a8a8; border-top-color: #e8e8e8; border-left-color: #e8e8e8; padding: 4px; flex: none; margin-left: 4px; }
.canvas { height: 456px; background: #fff; padding-left: 217px; }
.profile { width: 400px; height: 460px; display: block; }
.nlabel text { font: 56px "Liberation Sans", sans-serif; fill: #800080; text-anchor: middle; }
.dlabel text { font: 52px "Liberation Sans", sans-serif; fill: #000080; text-anchor: middle; }
.canvas-status { height: 36px; margin-top: 11px; border-top: 1px solid #dcdcdc; display: flex; }
.cs-left { width: 561px; border-right: 1px solid #dcdcdc; }
.cs-right { flex: 1; padding-left: 11px; line-height: 30px; display: flex; gap: 47px; }
.side { width: 186px; height: 511px; border: 1px solid #a8a8a8; border-top-color: #e8e8e8; flex: none; padding: 5px 4px; }
.side-box { border: 1px solid #a8a8a8; border-top-color: #d8d8d8; }
.sb-a { height: 296px; padding: 4px 0 0 5px; }
.side-lbl { padding-left: 9px; height: 21px; line-height: 20px; }
.field { background: #fff; border: 1px solid #707070; height: 25px; line-height: 22px; padding-left: 2px; white-space: nowrap; overflow: hidden; }
.f-name { width: 139px; margin-left: 9px; }
.ptable { width: 165px; height: 150px; margin-top: 14px; background: #fff; border: 1px solid #a8a8a8; padding: 1px; }
.p-row { display: grid; grid-template-columns: 59px 1fr; height: 20px; line-height: 19px; overflow: hidden; }
.p-row span { white-space: nowrap; }
.p-row span:first-child { background: linear-gradient(#f2f2f2, #cfcfcf); padding-left: 4px; border-right: 1px solid #bbb; border-bottom: 2px solid #bcbcbc; }
.p-row span:last-child { padding-left: 4px; border-bottom: 2px solid #eee; }
.p-head span:last-child { background: linear-gradient(#f2f2f2, #cfcfcf); border-bottom: 2px solid #bcbcbc; }
.p-row .p-fit { font-size: 12.500px; letter-spacing: -.3px; padding-left: 3px; }
.fs { position: relative; border: 1px solid #dcdcdc; }
.lg { position: absolute; left: 7px; top: -10px; height: 19px; line-height: 19px; background: #f0f0f0; padding-right: 1px; white-space: nowrap; }
.lg-fam { letter-spacing: -.7px; }
.lg-nam { letter-spacing: -.35px; }
.lg-cls { letter-spacing: -.6px; }
.fs-new { width: 165px; height: 60px; margin-top: 16px; display: flex; gap: 16px; padding: 17px 0 0 13px; }
.fs-new .lg { left: 5px; letter-spacing: -.25px; }
.pbtn { width: 57px; height: 38px; background: #e1e1e1; border: 1px solid #adadad; display: flex; align-items: center; justify-content: center; }
.pbtn svg { width: 32px; height: 24px; }
.pt { font: 700 11px "Liberation Mono", monospace; text-anchor: middle; fill: #000; }
.sb-b { height: 196px; margin-top: 8px; padding: 0 0 0 13px; }
.kv { display: flex; height: 25px; align-items: center; margin-top: 6px; }
.kv span { width: 33px; flex: none; position: relative; top: -2px; }
.k1 { margin-top: 3px; } .k2 { margin-top: 8px; } .k3 { margin-top: 5px; } .k5 { margin-top: 7px; }
.ro { width: 118px; height: 25px; border: 1px solid #d8d8d8; box-shadow: inset 0 0 0 1px #f8f8f8; }

/* bottom */
.d-bottom { height: 260px; flex: none; margin: 0 4px 0 2px; border-top: 1px solid #a8a8a8; border-bottom: 1px solid #a0a0a0; border-right: 1px solid #a0a0a0; display: flex; padding-left: 4px; }
.fs-family { width: 842px; height: 241px; margin-top: 13px; padding: 15px 0 0 4px; }
.ftable { width: 831px; height: 131px; background: #fff; border: 1px solid #808080; padding: 3px 1px 0; }
.f-row { display: grid; grid-template-columns: 216px 33px 33px 33px 33px 1fr; height: 21px; line-height: 20px; }
.f-row span { padding-left: 5px; border-right: 1px solid #ececec; border-bottom: 1px solid #f0f0f0; white-space: nowrap; }
.f-row span:first-child { padding-left: 6px; }
.f-row span:last-child { border-right: 0; }
.f-head { height: 22px; line-height: 18px; }
.f-sel { height: 20px; background: #d9d9d9; }
.f-sel span { border-color: #f0f0f0; border-bottom: 0; }
.hscroll { display: flex; height: 19px; margin-top: 1px; align-items: center; }
.hscroll svg { width: 22px; height: 12px; flex: none; }
.thumb { height: 19px; width: 699px; background: #c8c8c8; margin-right: 87px; }
.fam-low { display: flex; gap: 6px; margin-top: 5px; }
.fs-names { width: 771px; height: 73px; margin-top: 11px; padding-top: 7px; }
.n-row { display: flex; align-items: center; height: 25px; padding-left: 6px; line-height: 20px; }
.radio { width: 16px; height: 16px; border-radius: 50%; border: 1px solid #333; background: #fff; flex: none; }
.radio-on { background: radial-gradient(#333 0 4.500px, #fff 5.200px); margin-left: 1px; }
.r-l1 { margin-left: 3px; width: 85px; white-space: nowrap; letter-spacing: -.2px; padding-top: 2px; }
.r-l2 { margin-left: 3px; width: 180px; white-space: nowrap; letter-spacing: -.1px; padding-top: 2px; }
.f-auto { width: 448px; }
.n-row2 { margin-top: 6px; padding-left: 0; }
.hint { width: 307px; text-align: right; padding-right: 1px; letter-spacing: -.2px; }
.f-hint { width: 345px; }
.btn { background: #e1e1e1; border: 1px solid #adadad; display: flex; align-items: center; justify-content: center; flex: none; }
.b-use { width: 96px; height: 28px; margin-left: 10px; margin-top: 3px; }
.b-plus { width: 57px; height: 88px; }
.b-plus svg { width: 28px; height: 28px; }
.fs-class { width: 158px; height: 242px; margin-top: 11px; margin-left: 8px; padding: 42px 0 0 19px; }
.c-l { height: 20px; line-height: 20px; }
.c-l2 { margin-top: 28px; padding-left: 1px; letter-spacing: -.3px; }
.c-sel { width: 117px; margin-top: 6px; }
.char-col { width: 282px; margin-left: 1px; margin-top: 11px; flex: none; }
.fs-char { width: 282px; height: 203px; padding-top: 12px; }
.ch { display: grid; grid-template-columns: 62px 110px 79px; column-gap: 5px; height: 27.750px; align-items: center; }
.ch-k { text-align: right; white-space: nowrap; }
.ch-i { height: 22px; border: 1px solid #808080; box-shadow: inset 0 0 0 1px #fff; }
.cog { display: flex; margin-top: 12px; padding-left: 13px; height: 20px; }
.cog span:first-child { width: 126px; letter-spacing: -.4px; white-space: nowrap; }
.b-close { width: 151px; height: 28px; margin: 9px 0 0 102px; gap: 4px; padding-left: 6px; }
.b-close svg { width: 17px; height: 17px; }
```
